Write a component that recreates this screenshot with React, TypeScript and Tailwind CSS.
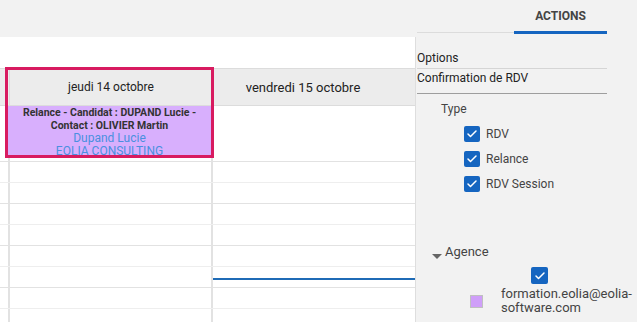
import { Check } from 'lucide-react';

const font = { fontFamily: 'Roboto, "Liberation Sans", sans-serif' };

function Box({ className = '' }: { className?: string }) {
    return (
        <span className={`w-4 h-4 shrink-0 rounded-[2px] bg-[#1565c0] flex items-center justify-center ${className}`}>
            <Check size={12} strokeWidth={3} color="white" />
        </span>
    );
}

const rows = [0, 1, 2, 3, 4, 5, 6, 7];

export default function App() {
    return (
        <div style={font} className="w-[637px] h-[322px] bg-[#f2f2f2] flex overflow-hidden text-[#222]">
            {/* calendar */}
            <div className="w-[416px] shrink-0 flex flex-col">
                <div className="h-[37px] shrink-0" />
                <div className="relative flex-1 bg-white border-r border-[#dedede]">
                    <div className="h-[31px]" />
                    <div className="grid grid-cols-[10px_203px_202px] h-[38px] bg-[#ececec] border-y border-[#dcdcdc]">
                        <div className="border-r border-[#dcdcdc]" />
                        <div className="border-r border-[#dcdcdc] flex items-center justify-center text-[12px] text-[#222] pb-[1px]">jeudi 14 octobre</div>
                        <div className="flex items-center justify-center text-[13px] text-[#222] pt-[1px] pr-[22px]">vendredi 15 octobre</div>
                    </div>
                    <div className="grid grid-cols-[10px_203px_202px] h-[56px] border-b border-[#e2e2e2]">
                        <div className="border-r-2 border-[#e2e2e2]" />
                        <div className="border-r-2 border-[#e2e2e2] pb-[5px]">
                            <div className="h-full bg-[#d8affd] flex flex-col items-center text-center pt-[1px] -ml-[2px]">
                                <span className="font-bold text-[#333] text-[10.5px] leading-[12.5px]">Relance - Candidat : DUPAND Lucie -</span>
                                <span className="font-bold text-[#333] text-[10.5px] leading-[12.5px]">Contact : OLIVIER Martin</span>
                                <span className="text-[12px] leading-[13px] text-[#4a8fe0]">Dupand Lucie</span>
                                <span className="text-[12px] leading-[13px] text-[#4a8fe0]">EOLIA CONSULTING</span>
                            </div>
                        </div>
                        <div />
                    </div>
                    {rows.map(i => (
                        <div key={i} className={`grid grid-cols-[10px_203px_202px] h-[21px] border-b ${i % 2 ? 'border-[#e2e2e2]' : 'border-[#eeeeee]'}`}>
                            <div className="border-r-2 border-[#e2e2e2]" />
                            <div className="border-r-2 border-[#e2e2e2]" />
                            <div className={i === 5 ? 'pt-[11px]' : ''}>
                                {i === 5 && <div className="h-[2px] bg-[#1f6bb6]" />}
                            </div>
                        </div>
                    ))}
                    <div className="absolute left-[5px] top-[30px] w-[209px] h-[91px] border-[3px] border-[#d81b60]" />
                </div>
            </div>

            {/* actions panel */}
            <div className="w-[221px] min-w-0 shrink-0 flex flex-col pl-[1px]">
                <div className="w-[190px] h-[33px] shrink-0 flex justify-end border-b border-[#dcdcdc]">
                    <div className="w-[93px] flex items-center justify-center font-bold text-[12px] text-[#444] border-b-[3px] border-[#1565c0] -mb-[2px] pt-[1px]">ACTIONS</div>
                </div>
                <div className="w-[190px] h-[36px] flex items-end pb-[1px] text-[12px] border-b border-[#d5d5d5]">Options</div>
                <div className="w-[190px] h-[25px] flex items-start text-[12px] border-b border-[#9e9e9e]">Confirmation de RDV</div>
                <div className="pl-[24px] pt-[7px] text-[12px] leading-[16px] text-[#444]">Type</div>
                <div className="flex flex-col gap-[9px] pl-[47px] pt-[9px] text-[12px] leading-[16px] text-[#444]">
                    <div className="flex items-center gap-[6px]"><Box />RDV</div>
                    <div className="flex items-center gap-[6px]"><Box />Relance</div>
                    <div className="flex items-center gap-[6px]"><Box />RDV Session</div>
                </div>
                <div className="flex items-center pl-[15px] pt-[52px] text-[13px] leading-[16px] text-[#444]">
                    <span className="w-0 h-0 border-x-[5px] border-x-transparent border-t-[5px] border-t-[#666] mt-[8px] mr-[3px]" />
                    Agence
                </div>
                <div className="pl-[114px] pt-[7px]"><Box className="w-[17px] h-[17px]" /></div>
                <div className="flex items-start pl-[53px] pt-[3px]">
                    <span className="w-[13px] h-[13px] bg-[#cf9ff9] border border-[#c0c0c0] mt-[8px] shrink-0" />
                    <span className="ml-[18px] text-[13px] leading-[14px] text-[#444] whitespace-nowrap">formation.eolia@eolia-<br />software.com</span>
                </div>
            </div>
        </div>
    );
}
